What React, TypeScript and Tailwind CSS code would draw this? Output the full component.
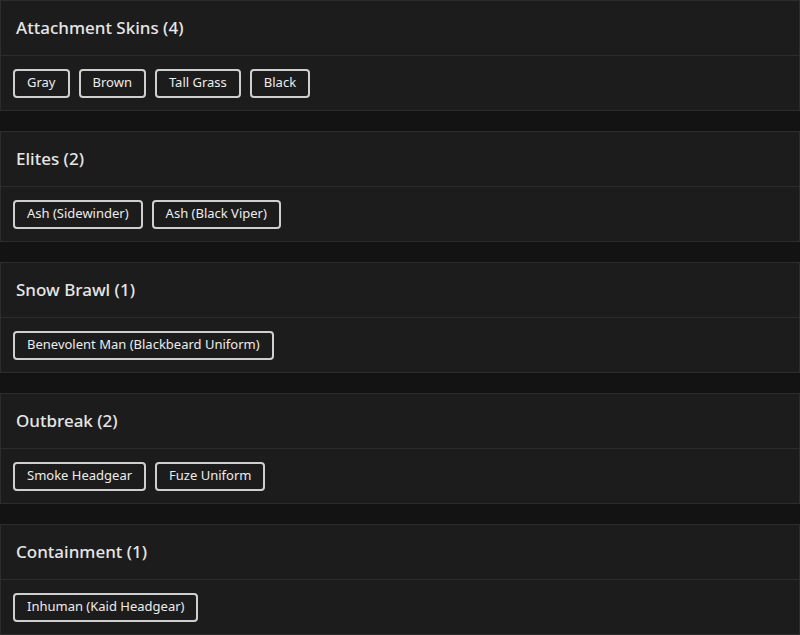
import React from 'react';

const groups = [
  { title: 'Attachment Skins', items: ['Gray', 'Brown', 'Tall Grass', 'Black'] },
  { title: 'Elites', items: ['Ash (Sidewinder)', 'Ash (Black Viper)'] },
  { title: 'Snow Brawl', items: ['Benevolent Man (Blackbeard Uniform)'] },
  { title: 'Outbreak', items: ['Smoke Headgear', 'Fuze Uniform'] },
  { title: 'Containment', items: ['Inhuman (Kaid Headgear)'] },
];

const App: React.FC = () => {
  return (
    <div className="min-h-[635px] w-[800px] bg-[#131313] flex flex-col gap-[20px] font-['Noto_Sans',sans-serif]">
      {groups.map((g) => (
        <section key={g.title} className="bg-[#1c1c1c] border border-[#2c2c2c]">
          {/* Header */}
          <div className="h-[55px] px-[15px] flex items-center border-b border-[#2c2c2c]">
            <h2 className="text-[17px] font-medium text-[#e6e6e6]">
              {g.title} ({g.items.length})
            </h2>
          </div>
          {/* Items */}
          <div className="h-[54px] px-[12px] flex items-center gap-[9px]">
            {g.items.map((it) => (
              <span
                key={it}
                className="h-[29px] px-[12px] flex items-center rounded-[4px] border-2 border-[#cfcfcf] text-[13px] text-[#ececec]"
              >
                {it}
              </span>
            ))}
          </div>
        </section>
      ))}
    </div>
  );
};

export default App;
